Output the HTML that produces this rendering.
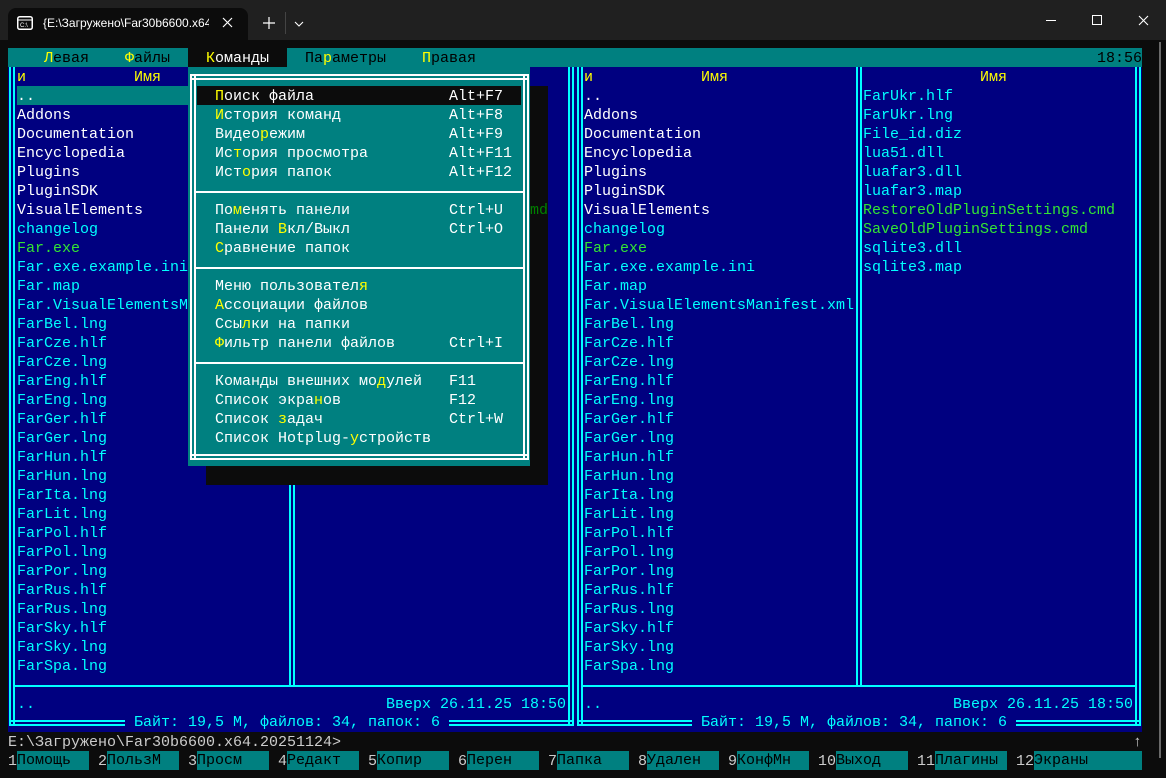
<!DOCTYPE html>
<html><head><meta charset="utf-8"><style>
*{margin:0;padding:0;box-sizing:content-box}
html,body{width:1166px;height:778px;overflow:hidden;background:#0c0c0c}
body{position:relative;font-family:"Liberation Mono","DejaVu Sans Mono",monospace;font-size:15px}
.a{position:absolute}
.t{position:absolute;white-space:pre;left:calc(8px + var(--c)*9px);top:calc(49px + var(--r)*19px);line-height:19px;height:19px}
.v{position:absolute;width:2px;border-left:2px solid #00ffff;border-right:2px solid #00ffff}
.h{position:absolute;height:2px;border-top:2px solid #00ffff;border-bottom:2px solid #00ffff}
.mv{border-color:#fff}
.w{color:#fff}.c{color:#00ffff}.y{color:#ffff00}.g{color:#33e633}.k{color:#000}.l{color:#cccccc}
.kb{background:#008080;color:#000;top:calc(48px + var(--r)*19px);padding-top:1px;height:18px;line-height:18px}
</style></head><body>
<!-- title bar -->
<div class="a" style="left:0;top:0;width:1166px;height:40px;background:#202020"></div>
<div class="a" style="left:8px;top:8px;width:240px;height:32px;background:#0c0c0c;border-radius:8px 8px 0 0"></div>
<svg class="a" style="left:17px;top:16px" width="16" height="14" viewBox="0 0 16 14"><rect x="0.75" y="0.75" width="14.5" height="12.5" rx="2" fill="none" stroke="#fff" stroke-width="1.5"/><line x1="1" y1="4" x2="15" y2="4" stroke="#fff" stroke-width="1"/><text x="3" y="11" font-size="6" fill="#fff" font-family="Liberation Sans">C:\</text></svg>
<div class="a" style="left:43px;top:16px;font:12px 'Liberation Sans','DejaVu Sans',sans-serif;color:#fff;white-space:pre;width:166px;overflow:hidden">{E:\Загружено\Far30b6600.x64</div>
<svg class="a" style="left:222px;top:17px" width="11" height="11"><path d="M1 1L10 10M10 1L1 10" stroke="#fff" stroke-width="1.2"/></svg>
<svg class="a" style="left:263px;top:17px" width="12" height="12"><path d="M6 0V12M0 6H12" stroke="#fff" stroke-width="1.2"/></svg>
<div class="a" style="left:285px;top:12px;width:1px;height:22px;background:#444"></div>
<svg class="a" style="left:294px;top:21px" width="10" height="6"><path d="M1 1L5 5L9 1" fill="none" stroke="#fff" stroke-width="1.1"/></svg>
<div class="a" style="left:1046px;top:20px;width:10px;height:1px;background:#fff"></div>
<div class="a" style="left:1092px;top:15px;width:8px;height:8px;border:1px solid #fff"></div>
<svg class="a" style="left:1138px;top:15px" width="11" height="11"><path d="M1 1L10 10M10 1L1 10" stroke="#fff" stroke-width="1.1"/></svg>
<div class="a" style="left:1159px;top:42px;width:2px;height:716px;background:#6a6a6a"></div>

<!-- menubar -->
<div class="a" style="left:8px;top:48px;width:1134px;height:19px;background:#008080"></div>
<div class="a" style="left:188px;top:48px;width:99px;height:19px;background:#0c0c0c"></div>
<div class="t k" style="--c:4;--r:0"><span class="y">Л</span>евая</div>
<div class="t k" style="--c:13;--r:0"><span class="y">Ф</span>айлы</div>
<div class="t w" style="--c:22;--r:0"><span class="y">К</span>оманды</div>
<div class="t k" style="--c:33;--r:0">Па<span class="y">р</span>аметры</div>
<div class="t k" style="--c:46;--r:0"><span class="y">П</span>равая</div>
<div class="t k" style="--c:121;--r:0">18:56</div>

<!-- panels bg -->
<div class="a" style="left:8px;top:67px;width:567px;height:665px;background:#000080"></div>
<div class="a" style="left:575px;top:67px;width:567px;height:665px;background:#000080"></div>
<div class="a" style="left:17px;top:86px;width:270px;height:19px;background:#008080"></div>

<!-- left panel borders -->
<div class="v" style="left:9px;top:67px;height:659px"></div>
<div class="v" style="left:568px;top:67px;height:659px"></div>
<div class="v" style="left:289px;top:67px;height:618px"></div>
<div class="h" style="left:9px;top:720px;width:565px"></div>
<div class="a" style="left:15px;top:685px;width:553px;height:2px;background:#00ffff"></div>
<!-- right panel borders -->
<div class="v" style="left:577px;top:67px;height:659px"></div>
<div class="v" style="left:1135px;top:67px;height:659px"></div>
<div class="v" style="left:856px;top:67px;height:618px"></div>
<div class="h" style="left:577px;top:720px;width:564px"></div>
<div class="a" style="left:583px;top:685px;width:552px;height:2px;background:#00ffff"></div>

<!-- left panel text -->
<div class="t y" style="--c:1;--r:1">и</div><div class="t y" style="--c:14;--r:1">Имя</div>
<div class="t w" style="--c:1;--r:2;height:auto">..
Addons
Documentation
Encyclopedia
Plugins
PluginSDK
VisualElements</div>
<div class="t c" style="--c:1;--r:9">changelog</div>
<div class="t g" style="--c:1;--r:10">Far.exe</div>
<div class="t c" style="--c:1;--r:11;height:auto">Far.exe.example.ini
Far.map
Far.VisualElementsManifest.xml
FarBel.lng
FarCze.hlf
FarCze.lng
FarEng.hlf
FarEng.lng
FarGer.hlf
FarGer.lng
FarHun.hlf
FarHun.lng
FarIta.lng
FarLit.lng
FarPol.hlf
FarPol.lng
FarPor.lng
FarRus.hlf
FarRus.lng
FarSky.hlf
FarSky.lng
FarSpa.lng</div>
<div class="t c" style="--c:1;--r:34">..</div>
<div class="t c" style="--c:42;--r:34">Вверх 26.11.25 18:50</div>
<div class="t c" style="--c:13;--r:35;background:#000080;top:calc(48px + 35*19px);padding-top:1px;height:18px;line-height:18px"> Байт: 19,5 М, файлов: 34, папок: 6 </div>

<!-- right panel text -->
<div class="t y" style="--c:64;--r:1">и</div><div class="t y" style="--c:77;--r:1">Имя</div><div class="t y" style="--c:108;--r:1">Имя</div>
<div class="t w" style="--c:64;--r:2;height:auto">..
Addons
Documentation
Encyclopedia
Plugins
PluginSDK
VisualElements</div>
<div class="t c" style="--c:64;--r:9">changelog</div>
<div class="t g" style="--c:64;--r:10">Far.exe</div>
<div class="t c" style="--c:64;--r:11;height:auto">Far.exe.example.ini
Far.map
Far.VisualElementsManifest.xml
FarBel.lng
FarCze.hlf
FarCze.lng
FarEng.hlf
FarEng.lng
FarGer.hlf
FarGer.lng
FarHun.hlf
FarHun.lng
FarIta.lng
FarLit.lng
FarPol.hlf
FarPol.lng
FarPor.lng
FarRus.hlf
FarRus.lng
FarSky.hlf
FarSky.lng
FarSpa.lng</div>
<div class="t c" style="--c:95;--r:2;height:auto">FarUkr.hlf
FarUkr.lng
File_id.diz
lua51.dll
luafar3.dll
luafar3.map</div>
<div class="t g" style="--c:95;--r:8;height:auto">RestoreOldPluginSettings.cmd
SaveOldPluginSettings.cmd</div>
<div class="t c" style="--c:95;--r:10;height:auto">sqlite3.dll
sqlite3.map</div>
<div class="t c" style="--c:64;--r:34">..</div>
<div class="t c" style="--c:105;--r:34">Вверх 26.11.25 18:50</div>
<div class="t c" style="--c:76;--r:35;background:#000080;top:calc(48px + 35*19px);padding-top:1px;height:18px;line-height:18px"> Байт: 19,5 М, файлов: 34, папок: 6 </div>

<!-- menu shadow -->
<div class="a" style="left:530px;top:86px;width:18px;height:399px;background:#0c0c0c"></div>
<div class="a" style="left:206px;top:466px;width:342px;height:19px;background:#0c0c0c"></div>
<div class="t" style="--c:58;--r:8;color:#008000">md</div>

<!-- menu -->
<div class="a" style="left:188px;top:67px;width:342px;height:399px;background:#008080"></div>
<div class="a" style="left:197px;top:86px;width:324px;height:19px;background:#0c0c0c"></div>
<div class="v mv" style="left:190px;top:74px;height:385px"></div>
<div class="v mv" style="left:523px;top:74px;height:385px"></div>
<div class="h mv" style="left:190px;top:74px;width:339px"></div>
<div class="h mv" style="left:190px;top:454px;width:339px"></div>
<div class="a" style="left:194px;top:191px;width:331px;height:2px;background:#fff"></div>
<div class="a" style="left:194px;top:267px;width:331px;height:2px;background:#fff"></div>
<div class="a" style="left:194px;top:362px;width:331px;height:2px;background:#fff"></div>

<div class="t w" style="--c:23;--r:2"><span class="y">П</span>оиск файла</div><div class="t w" style="--c:49;--r:2">Alt+F7</div>
<div class="t w" style="--c:23;--r:3"><span class="y">И</span>стория команд</div><div class="t w" style="--c:49;--r:3">Alt+F8</div>
<div class="t w" style="--c:23;--r:4">Видео<span class="y">р</span>ежим</div><div class="t w" style="--c:49;--r:4">Alt+F9</div>
<div class="t w" style="--c:23;--r:5">Ис<span class="y">т</span>ория просмотра</div><div class="t w" style="--c:49;--r:5">Alt+F11</div>
<div class="t w" style="--c:23;--r:6">Ист<span class="y">о</span>рия папок</div><div class="t w" style="--c:49;--r:6">Alt+F12</div>
<div class="t w" style="--c:23;--r:8">По<span class="y">м</span>енять панели</div><div class="t w" style="--c:49;--r:8">Ctrl+U</div>
<div class="t w" style="--c:23;--r:9">Панели <span class="y">В</span>кл/Выкл</div><div class="t w" style="--c:49;--r:9">Ctrl+O</div>
<div class="t w" style="--c:23;--r:10"><span class="y">С</span>равнение папок</div>
<div class="t w" style="--c:23;--r:12">Меню пользовател<span class="y">я</span></div>
<div class="t w" style="--c:23;--r:13"><span class="y">А</span>ссоциации файлов</div>
<div class="t w" style="--c:23;--r:14">Ссы<span class="y">л</span>ки на папки</div>
<div class="t w" style="--c:23;--r:15"><span class="y">Ф</span>ильтр панели файлов</div><div class="t w" style="--c:49;--r:15">Ctrl+I</div>
<div class="t w" style="--c:23;--r:17">Команды внешних мо<span class="y">д</span>улей</div><div class="t w" style="--c:49;--r:17">F11</div>
<div class="t w" style="--c:23;--r:18">Список экра<span class="y">н</span>ов</div><div class="t w" style="--c:49;--r:18">F12</div>
<div class="t w" style="--c:23;--r:19">Список <span class="y">з</span>адач</div><div class="t w" style="--c:49;--r:19">Ctrl+W</div>
<div class="t w" style="--c:23;--r:20">Список Hotplug-<span class="y">у</span>стройств</div>

<!-- command line -->
<div class="t l" style="--c:0;--r:36">E:\Загружено\Far30b6600.x64.20251124&gt;</div>
<div class="t l" style="--c:125;--r:36">↑</div>

<!-- keybar -->
<div class="t l" style="--c:0;--r:37">1</div><div class="t kb" style="--c:1;--r:37;width:72px">Помощь</div>
<div class="t l" style="--c:10;--r:37">2</div><div class="t kb" style="--c:11;--r:37;width:72px">ПользМ</div>
<div class="t l" style="--c:20;--r:37">3</div><div class="t kb" style="--c:21;--r:37;width:72px">Просм</div>
<div class="t l" style="--c:30;--r:37">4</div><div class="t kb" style="--c:31;--r:37;width:72px">Редакт</div>
<div class="t l" style="--c:40;--r:37">5</div><div class="t kb" style="--c:41;--r:37;width:72px">Копир</div>
<div class="t l" style="--c:50;--r:37">6</div><div class="t kb" style="--c:51;--r:37;width:72px">Перен</div>
<div class="t l" style="--c:60;--r:37">7</div><div class="t kb" style="--c:61;--r:37;width:72px">Папка</div>
<div class="t l" style="--c:70;--r:37">8</div><div class="t kb" style="--c:71;--r:37;width:72px">Удален</div>
<div class="t l" style="--c:80;--r:37">9</div><div class="t kb" style="--c:81;--r:37;width:72px">КонфМн</div>
<div class="t l" style="--c:90;--r:37">10</div><div class="t kb" style="--c:92;--r:37;width:72px">Выход</div>
<div class="t l" style="--c:101;--r:37">11</div><div class="t kb" style="--c:103;--r:37;width:72px">Плагины</div>
<div class="t l" style="--c:112;--r:37">12</div><div class="t kb" style="--c:114;--r:37;width:108px">Экраны</div>
</body></html>
